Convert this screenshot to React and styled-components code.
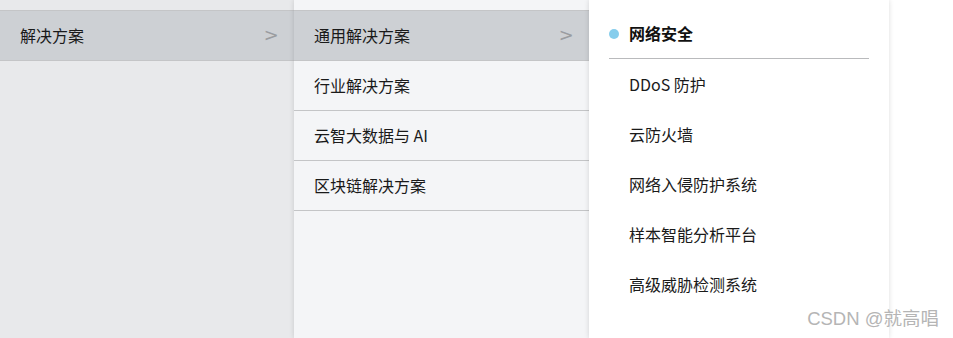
import React from 'react'
import styled, { createGlobalStyle } from 'styled-components'

const GlobalStyle = createGlobalStyle`
  html, body {
    margin: 0;
    padding: 0;
    background: #fff;
  }
  body {
    font-family: "Microsoft YaHei", "Noto Sans CJK SC", "Noto Sans", sans-serif;
    color: #222;
  }
`

const Page = styled.div`
  position: relative;
  display: flex;
  height: 338px;
  overflow: hidden;
  background: #fff;
`

const Column = styled.ul`
  list-style: none;
  margin: 0;
  padding: 10px 0 0;
  width: ${p => p.width}px;
  flex: none;
  background: ${p => p.bg};
  position: relative;
  z-index: ${p => p.layer || 0};
  box-shadow: ${p => (p.layer ? '0 0 5px rgba(0, 0, 0, 0.14)' : 'none')};
`

const Item = styled.li`
  display: flex;
  align-items: center;
  justify-content: space-between;
  padding: 0 16px 2px 20px;
  box-sizing: border-box;
  height: 50px;
  font-size: 16px;
  color: #1a1a1a;
  border-bottom: 1px solid #c4c5c7;
  background: ${p => (p.active ? '#cdd0d4' : 'transparent')};

  &:first-child {
    border-top: 1px solid #c4c5c7;
    height: 51px;
  }
`

const Arrow = styled.span`
  color: #9a9ca0;
  font-family: "DejaVu Sans", sans-serif;
  font-size: 17px;
  transform: scaleX(1.05);
`

const Panel = styled.div`
  width: 300px;
  flex: none;
  padding: 10px 20px 0;
  box-sizing: border-box;
  background: #fff;
  position: relative;
  z-index: 2;
  box-shadow: 0 0 5px rgba(0, 0, 0, 0.14);
`

const Heading = styled.div`
  display: flex;
  align-items: center;
  gap: 10px;
  height: 49px;
  padding-bottom: 2px;
  box-sizing: border-box;
  font-size: 16px;
  font-weight: bold;
  color: #111;
  border-bottom: 1px solid #b9babc;
`

const Dot = styled.span`
  width: 10px;
  height: 10px;
  border-radius: 50%;
  background: #86cdec;
  margin-top: 2px;
`

const Links = styled.ul`
  list-style: none;
  margin: 0;
  padding: 0 0 0 20px;
`

const Link = styled.li`
  height: 50px;
  line-height: 50px;
  font-size: 16px;
  color: #1a1a1a;
`

const Mark = styled.div`
  position: absolute;
  z-index: 5;
  right: 14px;
  bottom: 8px;
  font-family: "Liberation Sans", "Noto Sans CJK SC", sans-serif;
  font-size: 18.5px;
  color: #b5b5b5;
`

const secondLevel = ['通用解决方案', '行业解决方案', '云智大数据与 AI', '区块链解决方案']
const products = ['DDoS 防护', '云防火墙', '网络入侵防护系统', '样本智能分析平台', '高级威胁检测系统']

export default function App() {
  return (
    <>
      <GlobalStyle />
      <Page>
        <Column width={294} bg='#e8e9eb'>
          <Item active>
            解决方案
            <Arrow>&gt;</Arrow>
          </Item>
        </Column>
        <Column width={295} bg='#f4f5f7' layer={1}>
          {secondLevel.map((name, i) => (
            <Item key={name} active={i === 0}>
              {name}
              {i === 0 && <Arrow>&gt;</Arrow>}
            </Item>
          ))}
        </Column>
        <Panel>
          <Heading>
            <Dot />
            网络安全
          </Heading>
          <Links>
            {products.map(name => <Link key={name}>{name}</Link>)}
          </Links>
        </Panel>
        <Mark>CSDN @就高唱</Mark>
      </Page>
    </>
  )
}
